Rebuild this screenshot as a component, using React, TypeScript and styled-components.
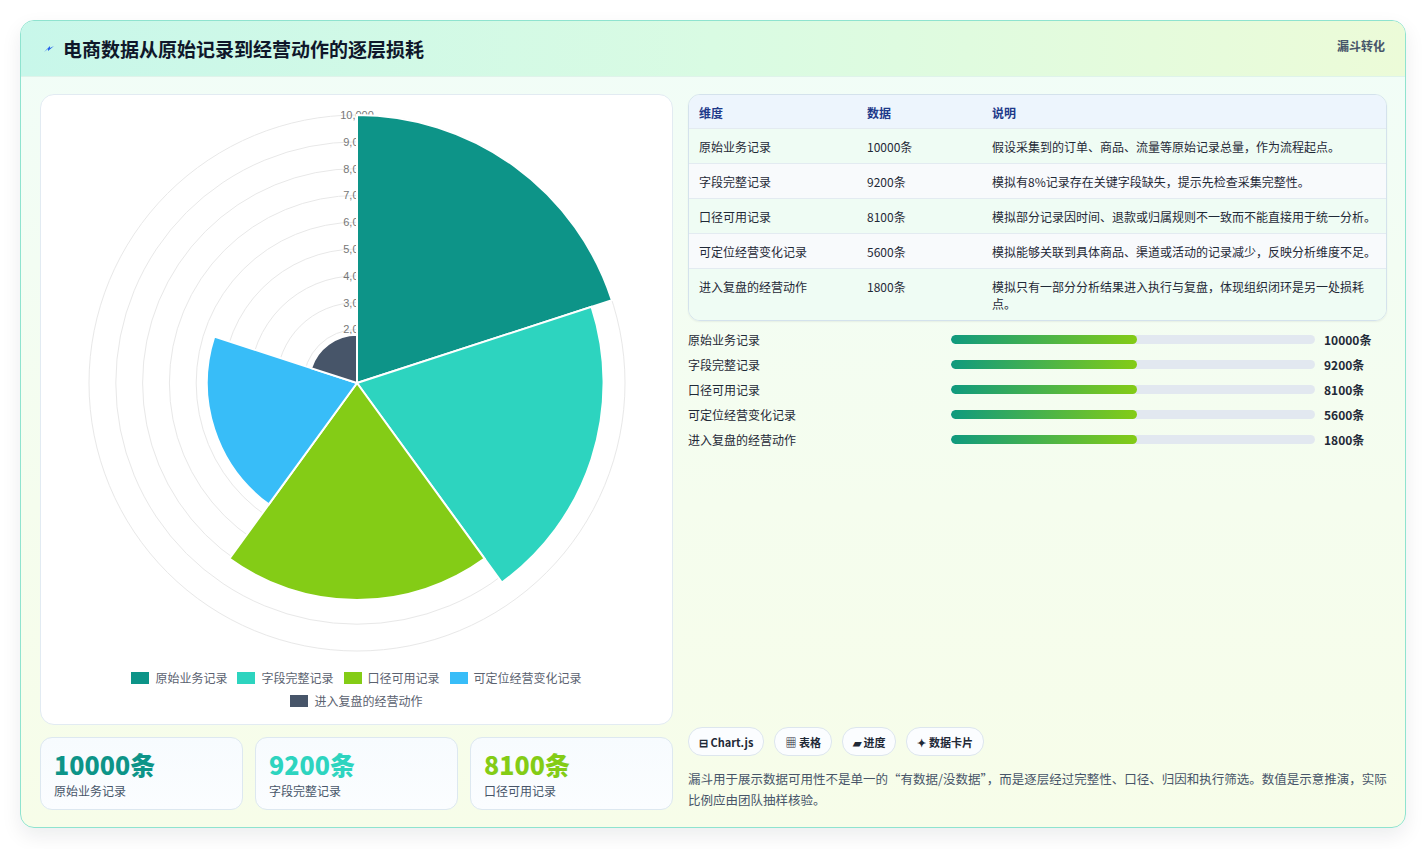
import React from "react";
import styled, { createGlobalStyle } from "styled-components";

const Global = createGlobalStyle`
  body { margin: 0; background: #fff; font-family: "Noto Sans CJK SC", "Noto Sans", sans-serif; color: #1f2937; }
`;

const Page = styled.div`padding: 20px 20px 21px 20px; height: 849px; box-sizing: border-box;`;
const Card = styled.div`
  height: 808px; box-sizing: border-box; border: 1px solid #8fe3cf; border-radius: 14px; overflow: hidden;
  background: linear-gradient(180deg, #f1fdf8 0%, #f5fdee 60%, #f7fde9 100%);
  box-shadow: 0 8px 20px rgba(15, 23, 42, 0.08); display: flex; flex-direction: column;
`;
const Header = styled.div`
  height: 55px; flex: none; display: flex; align-items: center; justify-content: space-between; padding: 0 20px 0 22px;
  background: linear-gradient(90deg, #c8f7ea 0%, #d9fbe3 50%, #ecfbd8 100%); border-bottom: 1px solid #dff3ea;
`;
const Title = styled.h1`margin: 0; font-size: 19px; font-weight: 700; color: #0f172a; display: flex; align-items: center; gap: 8px;`;
const Tag = styled.span`font-size: 12px; font-weight: 700; color: #475569; align-self: flex-start; margin-top: 16px;`;
const Body = styled.div`flex: 1; display: grid; grid-template-columns: 633px 699px; gap: 15px; padding: 17px 19px 18px 19px;`;
const Col = styled.div`display: flex; flex-direction: column; min-height: 0;`;
const ChartCard = styled.div`
  height: 631px; box-sizing: border-box; background: #fff; border: 1px solid #e2ebf2; border-radius: 14px;
  display: flex; flex-direction: column; align-items: center;
`;
const Legend = styled.div`display: flex; flex-wrap: wrap; justify-content: center; gap: 6px 10px; width: 480px; margin-top: 2px;`;
const LegendItem = styled.div`display: flex; align-items: center; gap: 6px; font-size: 12px; color: #5b6270;`;
const Swatch = styled.span<{ $c: string }>`width: 18px; height: 12px; background: ${p => p.$c};`;
const Kpis = styled.div`display: grid; grid-template-columns: repeat(3, 1fr); gap: 12px; margin-top: 12px;`;
const Kpi = styled.div`
  height: 73px; box-sizing: border-box; border: 1px solid #dde8f0; border-radius: 12px; padding: 10px 13px;
  background: linear-gradient(180deg, #f7fbfe, #fbfdff);
`;
const KpiValue = styled.div<{ $c: string }>`font-size: 25px; font-weight: 800; color: ${p => p.$c}; line-height: 32px;`;
const KpiLabel = styled.div`font-size: 12px; color: #475569; margin-top: 2px;`;
const Table = styled.div`border: 1px solid #d4e2ec; border-radius: 12px; overflow: hidden; box-shadow: 0 1px 2px rgba(0,0,0,0.06);`;
const Row = styled.div<{ $head?: boolean; $alt?: boolean }>`
  display: grid; grid-template-columns: 168px 125px 1fr; padding: 0 10px; align-items: start;
  font-size: 12px; line-height: 17px; color: ${p => (p.$head ? "#1e3a8a" : "#1f2937")}; font-weight: ${p => (p.$head ? 700 : 400)};
  background: ${p => (p.$head ? "#edf5fd" : p.$alt ? "#f8fafc" : "#effcf4")};
  border-top: ${p => (p.$head ? "none" : "1px solid #e3ebf1")};
  padding-top: 9px; padding-bottom: ${p => (p.$head ? "7px" : "8px")};
`;
const Bars = styled.div`display: flex; flex-direction: column; gap: 8px; margin-top: 10px;`;
const BarRow = styled.div`display: grid; grid-template-columns: 263px 364px 1fr; align-items: center; gap: 0; font-size: 12px; height: 17px;`;
const BarValue = styled.span`font-weight: 700; padding-left: 9px; font-size: 12px;`;
const Track = styled.div`height: 9px; border-radius: 5px; background: #e2e8f0; overflow: hidden;`;
const Fill = styled.div`height: 100%; border-radius: 5px; background: linear-gradient(90deg, #0f9a7e, #84cc16);`;
const Chips = styled.div`display: flex; gap: 10px; margin-top: auto;`;
const Chip = styled.span`
  height: 27px; padding: 0 10px; border: 1px solid #dde6ee; border-radius: 14px; background: #fbfdff;
  font-size: 11px; font-weight: 700; display: flex; align-items: center; gap: 3px; color: #1f2937;
`;
const Note = styled.p`margin: 12px 0 0; font-size: 12.5px; line-height: 21px; color: #475569;`;

const data = [
  { name: "原始业务记录", v: 10000, c: "#0d9488" },
  { name: "字段完整记录", v: 9200, c: "#2dd4bf" },
  { name: "口径可用记录", v: 8100, c: "#84cc16" },
  { name: "可定位经营变化记录", v: 5600, c: "#38bdf8" },
  { name: "进入复盘的经营动作", v: 1800, c: "#475569" },
];
const desc = [
  "假设采集到的订单、商品、流量等原始记录总量，作为流程起点。",
  "模拟有8%记录存在关键字段缺失，提示先检查采集完整性。",
  "模拟部分记录因时间、退款或归属规则不一致而不能直接用于统一分析。",
  "模拟能够关联到具体商品、渠道或活动的记录减少，反映分析维度不足。",
  "模拟只有一部分分析结果进入执行与复盘，体现组织闭环是另一处损耗点。",
];

function Polar() {
  const cx = 316, cy = 288, k = 0.0268;
  const pt = (r: number, a: number) => [cx + r * Math.cos((a * Math.PI) / 180), cy + r * Math.sin((a * Math.PI) / 180)];
  return (
    <svg width="632" height="572" viewBox="0 0 632 572">
      {Array.from({ length: 10 }, (_, i) => (
        <circle key={i} cx={cx} cy={cy} r={(i + 1) * 1000 * k} fill="none" stroke="#e8e8e8" strokeWidth="1" />
      ))}
      {Array.from({ length: 9 }, (_, i) => {
        const v = (i + 2) * 1000;
        return (
          <text key={v} x={cx} y={cy - v * k + 4} textAnchor="middle" fontSize="11" fill="#777" fontFamily="Liberation Sans, sans-serif">
            {v.toLocaleString("en-US")}
          </text>
        );
      })}
      {data.map((d, i) => {
        const r = d.v * k, a0 = -90 + i * 72, a1 = a0 + 72;
        const [x0, y0] = pt(r, a0), [x1, y1] = pt(r, a1);
        return <path key={i} d={`M${cx},${cy} L${x0},${y0} A${r},${r} 0 0 1 ${x1},${y1} Z`} fill={d.c} stroke="#fff" strokeWidth="2" />;
      })}
    </svg>
  );
}

export default function App() {
  return (
    <Page>
      <Global />
      <Card>
        <Header>
          <Title>
            <svg width="12" height="12" viewBox="0 0 12 12"><path d="M1 9 L5 6 L5 8 L11 3 L7 5 L7 3 Z" fill="#2563eb" /></svg>
            电商数据从原始记录到经营动作的逐层损耗
          </Title>
          <Tag>漏斗转化</Tag>
        </Header>
        <Body>
          <Col>
            <ChartCard>
              <Polar />
              <Legend>
                {data.map(d => (
                  <LegendItem key={d.name}><Swatch $c={d.c} />{d.name}</LegendItem>
                ))}
              </Legend>
            </ChartCard>
            <Kpis>
              {data.slice(0, 3).map(d => (
                <Kpi key={d.name}>
                  <KpiValue $c={d.c}>{d.v}条</KpiValue>
                  <KpiLabel>{d.name}</KpiLabel>
                </Kpi>
              ))}
            </Kpis>
          </Col>
          <Col>
            <Table>
              <Row $head><span>维度</span><span>数据</span><span>说明</span></Row>
              {data.map((d, i) => (
                <Row key={d.name} $alt={i % 2 === 1}><span>{d.name}</span><span>{d.v}条</span><span>{desc[i]}</span></Row>
              ))}
            </Table>
            <Bars>
              {data.map(d => (
                <BarRow key={d.name}>
                  <span>{d.name}</span>
                  <Track><Fill style={{ width: "51%" }} /></Track>
                  <BarValue>{d.v}条</BarValue>
                </BarRow>
              ))}
            </Bars>
            <Chips>
              <Chip>⊟ Chart.js</Chip>
              <Chip>▦ 表格</Chip>
              <Chip>▰ 进度</Chip>
              <Chip>✦ 数据卡片</Chip>
            </Chips>
            <Note>漏斗用于展示数据可用性不是单一的“有数据/没数据”，而是逐层经过完整性、口径、归因和执行筛选。数值是示意推演，实际比例应由团队抽样核验。</Note>
          </Col>
        </Body>
      </Card>
    </Page>
  );
}
